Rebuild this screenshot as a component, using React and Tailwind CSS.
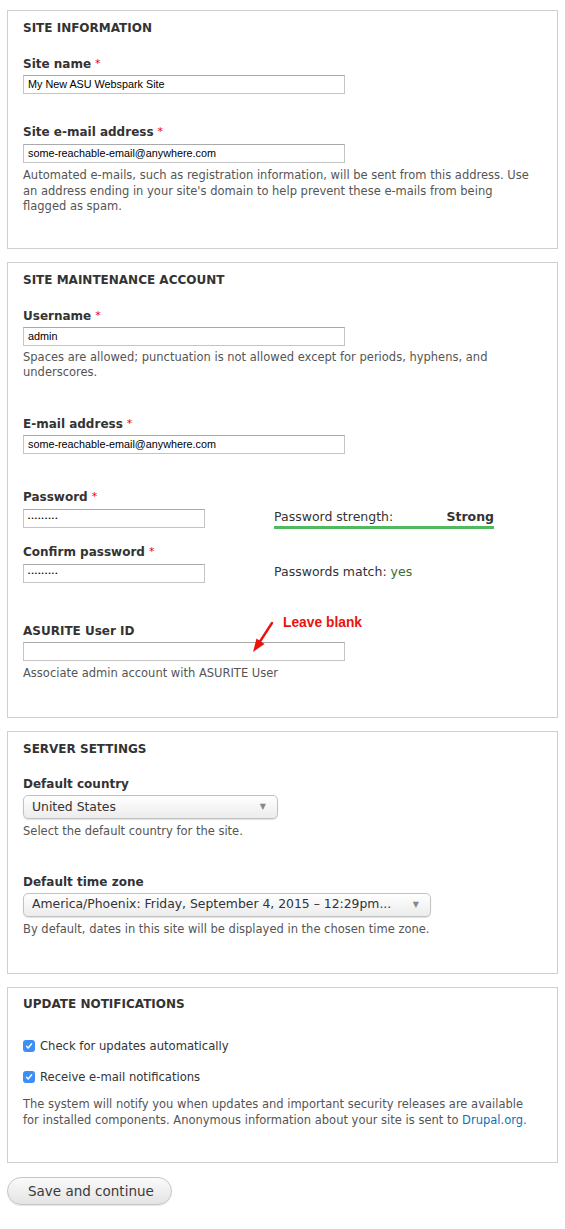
import React from "react";

const F = { fontFamily: '"DejaVu Sans", Verdana, sans-serif' };

function Req() {
  return <span className="text-[#e00] text-[11px] font-normal align-top ml-[4px]">*</span>;
}

function Label({ children, req, className = "" }) {
  return (
    <div className={"text-[12px] leading-[16px] font-bold text-[#333] " + className}>
      {children}
      {req && <Req />}
    </div>
  );
}

function TextBox({ value, w = "w-[322px]", className = "", dots }) {
  return (
    <div
      className={
        "h-[19px] border border-[#c4c4c4] border-t-[#aaa] bg-white flex items-center px-[4px] text-[10.8px] text-black " +
        w +
        " " +
        className
      }
      style={{ fontFamily: '"Liberation Sans", Arial, sans-serif' }}
    >
      {dots ? (
        <span className="text-[6px] tracking-[1.3px] leading-none">•••••••••</span>
      ) : (
        value
      )}
    </div>
  );
}

function Desc({ children, className = "" }) {
  return <div className={"text-[11.5px] leading-[15.5px] text-[#555] " + className}>{children}</div>;
}

function Title({ children }) {
  return <div className="text-[12px] leading-[16px] font-bold text-[#333] uppercase">{children}</div>;
}

function Fieldset({ children, className = "" }) {
  return (
    <div className={"mx-[7px] border border-[#cfcfcf] pl-[15px] pr-[15px] " + className}>{children}</div>
  );
}

function Select({ value, w }) {
  return (
    <div
      className={
        "h-[24px] rounded-[5px] border border-[#c2c2c2] bg-gradient-to-b from-white to-[#ececec] shadow-[0_1px_1px_rgba(0,0,0,0.12)] flex items-center justify-between pl-[8px] pr-[11px] text-[12.4px] text-[#333] " +
        w
      }
    >
      <span>{value}</span>
      <span className="text-[8px] text-[#888]">▼</span>
    </div>
  );
}

function Check({ children, className = "" }) {
  return (
    <div className={"flex items-center gap-[5px] " + className}>
      <div className="w-[12px] h-[12px] rounded-[3px] bg-[#3d8ff5] flex items-center justify-center">
        <svg width="8" height="8" viewBox="0 0 8 8">
          <path d="M1.5 4.2 L3.2 6 L6.6 1.8" stroke="white" strokeWidth="1.4" fill="none" strokeLinecap="round" strokeLinejoin="round" />
        </svg>
      </div>
      <span className="text-[11.6px] leading-[16px] text-[#333]">{children}</span>
    </div>
  );
}

export default function App() {
  return (
    <div className="bg-white w-[565px] min-h-[1229px] pt-[10px]" style={F}>
      {/* SITE INFORMATION */}
      <Fieldset className="pt-[9px] pb-[33px]">
        <Title>Site information</Title>
        <Label req className="mt-[20px]">Site name</Label>
        <TextBox value="My New ASU Webspark Site" className="mt-[3px]" />
        <Label req className="mt-[30px]">Site e-mail address</Label>
        <TextBox value="some-reachable-email@anywhere.com" className="mt-[4px]" />
        <Desc className="mt-[5px] max-w-[512px]">
          Automated e-mails, such as registration information, will be sent from this address. Use an address ending
          in your site's domain to help prevent these e-mails from being flagged as spam.
        </Desc>
      </Fieldset>

      {/* SITE MAINTENANCE ACCOUNT */}
      <Fieldset className="mt-[13px] pt-[9px] pb-[36px]">
        <Title>Site maintenance account</Title>
        <Label req className="mt-[20px]">Username</Label>
        <TextBox value="admin" className="mt-[3px]" />
        <Desc className="mt-[4px]">
          Spaces are allowed; punctuation is not allowed except for periods, hyphens, and underscores.
        </Desc>
        <Label req className="mt-[35px]">E-mail address</Label>
        <TextBox value="some-reachable-email@anywhere.com" className="mt-[3px]" />

        <div className="flex mt-[35px]">
          <div className="w-[251px]">
            <Label req>Password</Label>
            <TextBox dots w="w-[182px]" className="mt-[4px]" />
            <Label req className="mt-[16px]">Confirm password</Label>
            <TextBox dots w="w-[182px]" className="mt-[4px]" />
          </div>
          <div className="w-[220px]">
            <div className="mt-[20px] flex justify-between text-[12.5px] leading-[16px] text-[#333]">
              <span>Password strength:</span>
              <span className="font-bold">Strong</span>
            </div>
            <div className="h-[3px] bg-[#4fbb5e] mt-[1px]" />
            <div className="mt-[35px] text-[12.5px] leading-[16px] text-[#333]">
              Passwords match: <span className="text-[#3b6d2a]">yes</span>
            </div>
          </div>
        </div>

        <div className="relative mt-[40px]">
          <Label>ASURITE User ID</Label>
          <div
            className="absolute left-[260px] top-[-8px] text-[13.8px] leading-[16px] font-bold text-[#e8140f]"
            style={{ fontFamily: '"Liberation Sans", Arial, sans-serif' }}
          >
            Leave blank
          </div>
          <svg className="absolute left-[224px] top-[-2px]" width="30" height="34" viewBox="0 0 30 34">
            <path d="M25 2 L12 22" stroke="#e8140f" strokeWidth="2.4" strokeLinecap="round" />
            <path d="M6 31 L9.5 17.5 L17.5 23 Z" fill="#e8140f" />
          </svg>
          <TextBox value="" className="mt-[3px]" />
          <Desc className="mt-[5px]">Associate admin account with ASURITE User</Desc>
        </div>
      </Fieldset>

      {/* SERVER SETTINGS */}
      <Fieldset className="mt-[13px] pt-[9px] pb-[36px]">
        <Title>Server settings</Title>
        <Label className="mt-[19px]">Default country</Label>
        <div className="mt-[3px]">
          <Select value="United States" w="w-[255px]" />
        </div>
        <Desc className="mt-[5px]">Select the default country for the site.</Desc>
        <Label className="mt-[34px]">Default time zone</Label>
        <div className="mt-[3px]">
          <Select value="America/Phoenix: Friday, September 4, 2015 – 12:29pm..." w="w-[408px]" />
        </div>
        <Desc className="mt-[5px]">By default, dates in this site will be displayed in the chosen time zone.</Desc>
      </Fieldset>

      {/* UPDATE NOTIFICATIONS */}
      <Fieldset className="mt-[13px] pt-[8px] pb-[34px]">
        <Title>Update notifications</Title>
        <Check className="mt-[26px]">Check for updates automatically</Check>
        <Check className="mt-[15px]">Receive e-mail notifications</Check>
        <Desc className="mt-[12px]">
          The system will notify you when updates and important security releases are available for installed
          components. Anonymous information about your site is sent to{" "}
          <span className="text-[#0b71b8]">Drupal.org.</span>
        </Desc>
      </Fieldset>

      <div className="mx-[7px] mt-[14px]">
        <div className="inline-flex items-center h-[28px] w-[165px] rounded-full border border-[#c6c6c6] bg-gradient-to-b from-[#fafafa] to-[#e4e4e4] shadow-[0_1px_1px_rgba(0,0,0,0.1)] pl-[20px] text-[13.5px] text-[#3a3a3a]">
          Save and continue
        </div>
      </div>
    </div>
  );
}
